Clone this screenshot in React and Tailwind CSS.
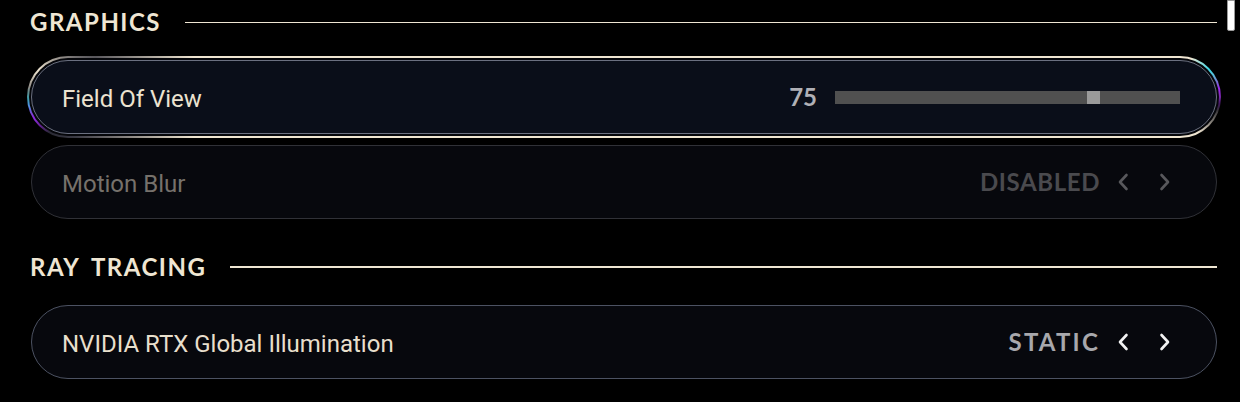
import React from "react";

const Chevron = ({ dir, color }) => (
  <svg width="12" height="18" viewBox="0 0 12 18" fill="none">
    <path
      d={dir === "left" ? "M9.5 2 L3 9 L9.5 16" : "M2.5 2 L9 9 L2.5 16"}
      stroke={color}
      strokeWidth="2.6"
      strokeLinecap="round"
      strokeLinejoin="round"
    />
  </svg>
);

const Heading = ({ children, lineClass }) => (
  <div className="flex h-[44px] items-center">
    <span
      className="text-[24px] font-bold tracking-[1.5px] leading-none text-[#efe6d3] [word-spacing:5px]"
      style={{ fontFamily: "Lato, 'Noto Sans', sans-serif" }}
    >
      {children}
    </span>
    <div className={`ml-[24px] flex-1 bg-[#efe6d3] ${lineClass}`} />
  </div>
);

const Selector = ({ value, valueColor, chevColor, track }) => (
  <div className="flex items-center">
    <span
      className={`text-[24px] font-bold leading-none ${track}`}
      style={{ fontFamily: "Lato, 'Noto Sans', sans-serif", color: valueColor }}
    >
      {value}
    </span>
    <div className="ml-[8px] flex w-[30px] justify-center">
      <Chevron dir="left" color={chevColor} />
    </div>
    <div className="ml-[12px] flex w-[30px] justify-center">
      <Chevron dir="right" color={chevColor} />
    </div>
  </div>
);

export default function App() {
  const label = { fontFamily: "Roboto, 'Noto Sans', sans-serif" };
  return (
    <div className="relative h-[402px] w-[1240px] overflow-hidden bg-black">
      <div className="absolute right-[5px] top-0 h-[31px] w-[8px] rounded-b-[2px] border border-[#9a9a9a] bg-white" />
      <div className="flex flex-col pl-[31px] pr-[23px]">
        <div className="-ml-[1px]">
          <Heading lineClass="h-px">GRAPHICS</Heading>
        </div>

        <div
          className="-mx-[4px] mt-[12px] rounded-full p-[2px]"
          style={{
            background:
              "radial-gradient(22px 22px at 0.4% 78%, #9b22e8, transparent), radial-gradient(20px 20px at 0.2% 62%, #2cd4e6, transparent), radial-gradient(22px 22px at 99.1% 16%, #35d6e6, transparent), radial-gradient(22px 22px at 99.8% 40%, #a020f0, transparent), radial-gradient(30px 40px at 99.8% 58%, #101018, transparent), radial-gradient(60px 40px at 1% 18%, #efe5d1, transparent), linear-gradient(to right, #1b1b26 0%, #3a3a44 4%, #efe5d1 14%, #efe5d1 100%)",
          }}
        >
          <div className="rounded-full bg-[#05060a] p-[2px]">
            <div className="flex h-[74px] items-center justify-between rounded-full border border-[#6b7080] bg-[#0a0e19] pl-[30px] pr-[36px]">
              <span className="mt-[3px] text-[24px] text-[#ece3d0]" style={label}>
                Field Of View
              </span>
              <div className="flex items-center">
                <span
                  className="text-[24px] font-bold leading-none text-[#b0b0b6]"
                  style={{ fontFamily: "Lato, 'Noto Sans', sans-serif" }}
                >
                  75
                </span>
                <div className="ml-[18px] flex h-[13px] w-[345px] bg-[#505050]">
                  <div className="w-[252px]" />
                  <div className="h-[13px] w-[13px] bg-[#9a9a9a]" />
                </div>
              </div>
            </div>
          </div>
        </div>

        <div className="mt-[7px] flex h-[74px] items-center justify-between rounded-full border border-[#303137] bg-[#07080d] pl-[30px] pr-[36px]">
          <span className="mt-[3px] text-[24px] text-[#76716b]" style={label}>
            Motion Blur
          </span>
          <Selector value="DISABLED" valueColor="#4a4a4e" chevColor="#58585c" track="tracking-[0.6px]" />
        </div>

        <div className="-ml-[1px] mt-[26px]">
          <Heading lineClass="h-[2px]">RAY TRACING</Heading>
        </div>

        <div className="mt-[16px] flex h-[74px] items-center justify-between rounded-full border border-[#4c5262] bg-[#07080d] pl-[30px] pr-[36px]">
          <span className="mt-[3px] text-[24px] text-[#e8dfcc]" style={label}>
            NVIDIA RTX Global Illumination
          </span>
          <Selector value="STATIC" valueColor="#a8a8ac" chevColor="#f2f2f2" track="tracking-[2.2px]" />
        </div>
      </div>
    </div>
  );
}
